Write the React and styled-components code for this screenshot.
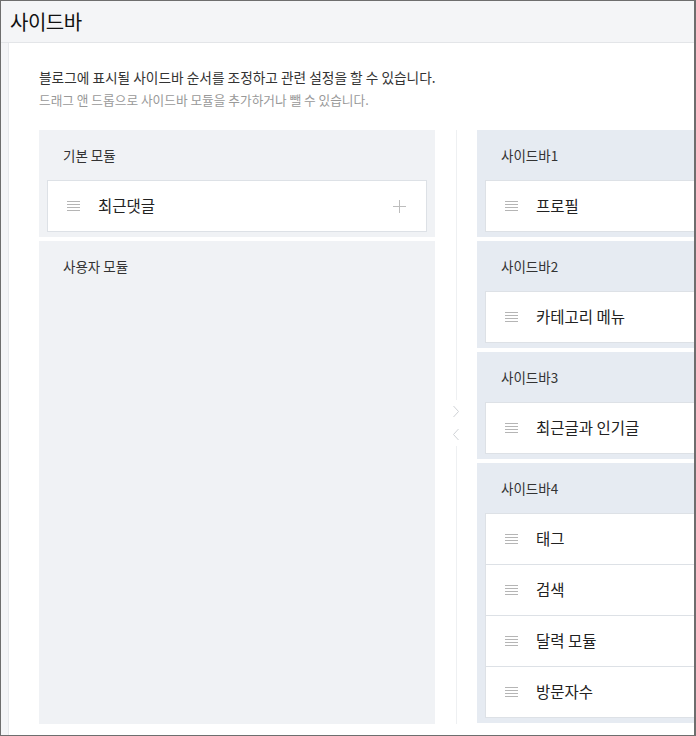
import React from 'react';
import styled, { createGlobalStyle } from 'styled-components';

const GlobalStyle = createGlobalStyle`
    html, body {
        margin: 0;
        padding: 0;
        background: #fff;
    }
    body {
        font-family: "Noto Sans CJK KR", "Noto Sans", sans-serif;
        color: #222;
    }
`;

const Frame = styled.div`
    width: 696px;
    height: 736px;
    box-sizing: border-box;
    border: 1px solid #6e6e6e;
    border-right-width: 2px;
    background: #f4f5f7;
    overflow: hidden;
    display: flex;
    flex-direction: column;
`;

const TitleBar = styled.header`
    height: 41px;
    flex: none;
    border-bottom: 1px solid #e3e5e8;
    display: flex;
    align-items: center;
    padding-left: 9px;
`;

const Title = styled.h1`
    margin: 0;
    font-size: 20px;
    font-weight: 400;
    color: #111;
    letter-spacing: -0.5px;
`;

const Panel = styled.section`
    flex: 1;
    margin-left: 7px;
    width: 960px;
    background: #fff;
    border-left: 1px solid #e6e8eb;
    padding: 24px 30px 11px;
    box-sizing: border-box;
    display: flex;
    flex-direction: column;
`;

const Desc = styled.p`
    margin: 0;
    font-size: 13.7px;
    line-height: 20px;
    color: #333;
`;

const SubDesc = styled.p`
    margin: 3px 0 0;
    font-size: 12.7px;
    line-height: 20px;
    color: #999;
`;

const Columns = styled.div`
    flex: 1;
    margin-top: 20px;
    display: grid;
    grid-template-columns: 396px 42px 396px;
`;

const Column = styled.div`
    display: flex;
    flex-direction: column;
    gap: 4px;
`;

const Box = styled.div`
    background: ${p => (p.$blue ? '#e6ebf2' : '#f0f2f5')};
    padding: 0 8px 5px;
    ${p => p.$grow && 'flex: 1;'}
`;

const BoxHead = styled.div`
    height: 50px;
    display: flex;
    align-items: center;
    padding-left: 16px;
    font-size: 13.5px;
    color: #333;
`;

const List = styled.ul`
    list-style: none;
    margin: 0;
    padding: 0;
    background: #fff;
    border: 1px solid #dde1e6;
    border-bottom: 0;
`;

const Item = styled.li`
    height: 50px;
    border-bottom: 1px solid #dde1e6;
    display: flex;
    align-items: center;
    padding: 0 19px;
    font-size: 15.5px;
    color: #222;
`;

const Handle = styled.span`
    width: 13px;
    height: 10px;
    flex: none;
    margin-right: 18px;
    background: repeating-linear-gradient(
        to bottom,
        #b5b5b5 0,
        #b5b5b5 1px,
        transparent 1px,
        transparent 3px
    );
`;

const Label = styled.span`
    flex: 1;
    margin-top: -2px;
`;

const Plus = styled.span`
    position: relative;
    width: 13px;
    height: 13px;
    flex: none;
    margin-right: 1px;
    &::before, &::after {
        content: '';
        position: absolute;
        background: #bdbdbd;
    }
    &::before {
        left: 6px;
        top: 0;
        width: 1px;
        height: 13px;
    }
    &::after {
        top: 6px;
        left: 0;
        height: 1px;
        width: 13px;
    }
`;

const Divider = styled.div`
    display: flex;
    flex-direction: column;
    align-items: center;
`;

const Line = styled.div`
    width: 1px;
    background: #eef0f2;
    flex: ${p => (p.$top ? 'none' : '1')};
    ${p => p.$top && 'height: 270px;'}
`;

const Arrows = styled.div`
    padding: 5px 0;
    display: flex;
    flex-direction: column;
    gap: 10px;
`;

function Chevron({ dir }) {
    return (
        <svg width="8" height="13" viewBox="0 0 8 13">
            <path
                d={dir === 'right' ? 'M1.5 1 L6.5 6.5 L1.5 12' : 'M6.5 1 L1.5 6.5 L6.5 12'}
                fill="none"
                stroke="#cfd2d6"
                strokeWidth="1"
            />
        </svg>
    );
}

const sidebars = [
    { name: '사이드바1', items: ['프로필'] },
    { name: '사이드바2', items: ['카테고리 메뉴'] },
    { name: '사이드바3', items: ['최근글과 인기글'] },
    { name: '사이드바4', items: ['태그', '검색', '달력 모듈', '방문자수'] },
];

function App() {
    return (
        <Frame>
            <GlobalStyle />
            <TitleBar>
                <Title>사이드바</Title>
            </TitleBar>
            <Panel>
                <Desc>블로그에 표시될 사이드바 순서를 조정하고 관련 설정을 할 수 있습니다.</Desc>
                <SubDesc>드래그 앤 드롭으로 사이드바 모듈을 추가하거나 뺄 수 있습니다.</SubDesc>
                <Columns>
                    <Column>
                        <Box>
                            <BoxHead>기본 모듈</BoxHead>
                            <List>
                                <Item>
                                    <Handle />
                                    <Label>최근댓글</Label>
                                    <Plus />
                                </Item>
                            </List>
                        </Box>
                        <Box $grow>
                            <BoxHead>사용자 모듈</BoxHead>
                        </Box>
                    </Column>
                    <Divider>
                        <Line $top />
                        <Arrows>
                            <Chevron dir="right" />
                            <Chevron dir="left" />
                        </Arrows>
                        <Line />
                    </Divider>
                    <Column>
                        {sidebars.map(sb => (
                            <Box $blue key={sb.name}>
                                <BoxHead>{sb.name}</BoxHead>
                                <List>
                                    {sb.items.map(item => (
                                        <Item key={item}>
                                            <Handle />
                                            <Label>{item}</Label>
                                        </Item>
                                    ))}
                                </List>
                            </Box>
                        ))}
                    </Column>
                </Columns>
            </Panel>
        </Frame>
    );
}

export default App;
